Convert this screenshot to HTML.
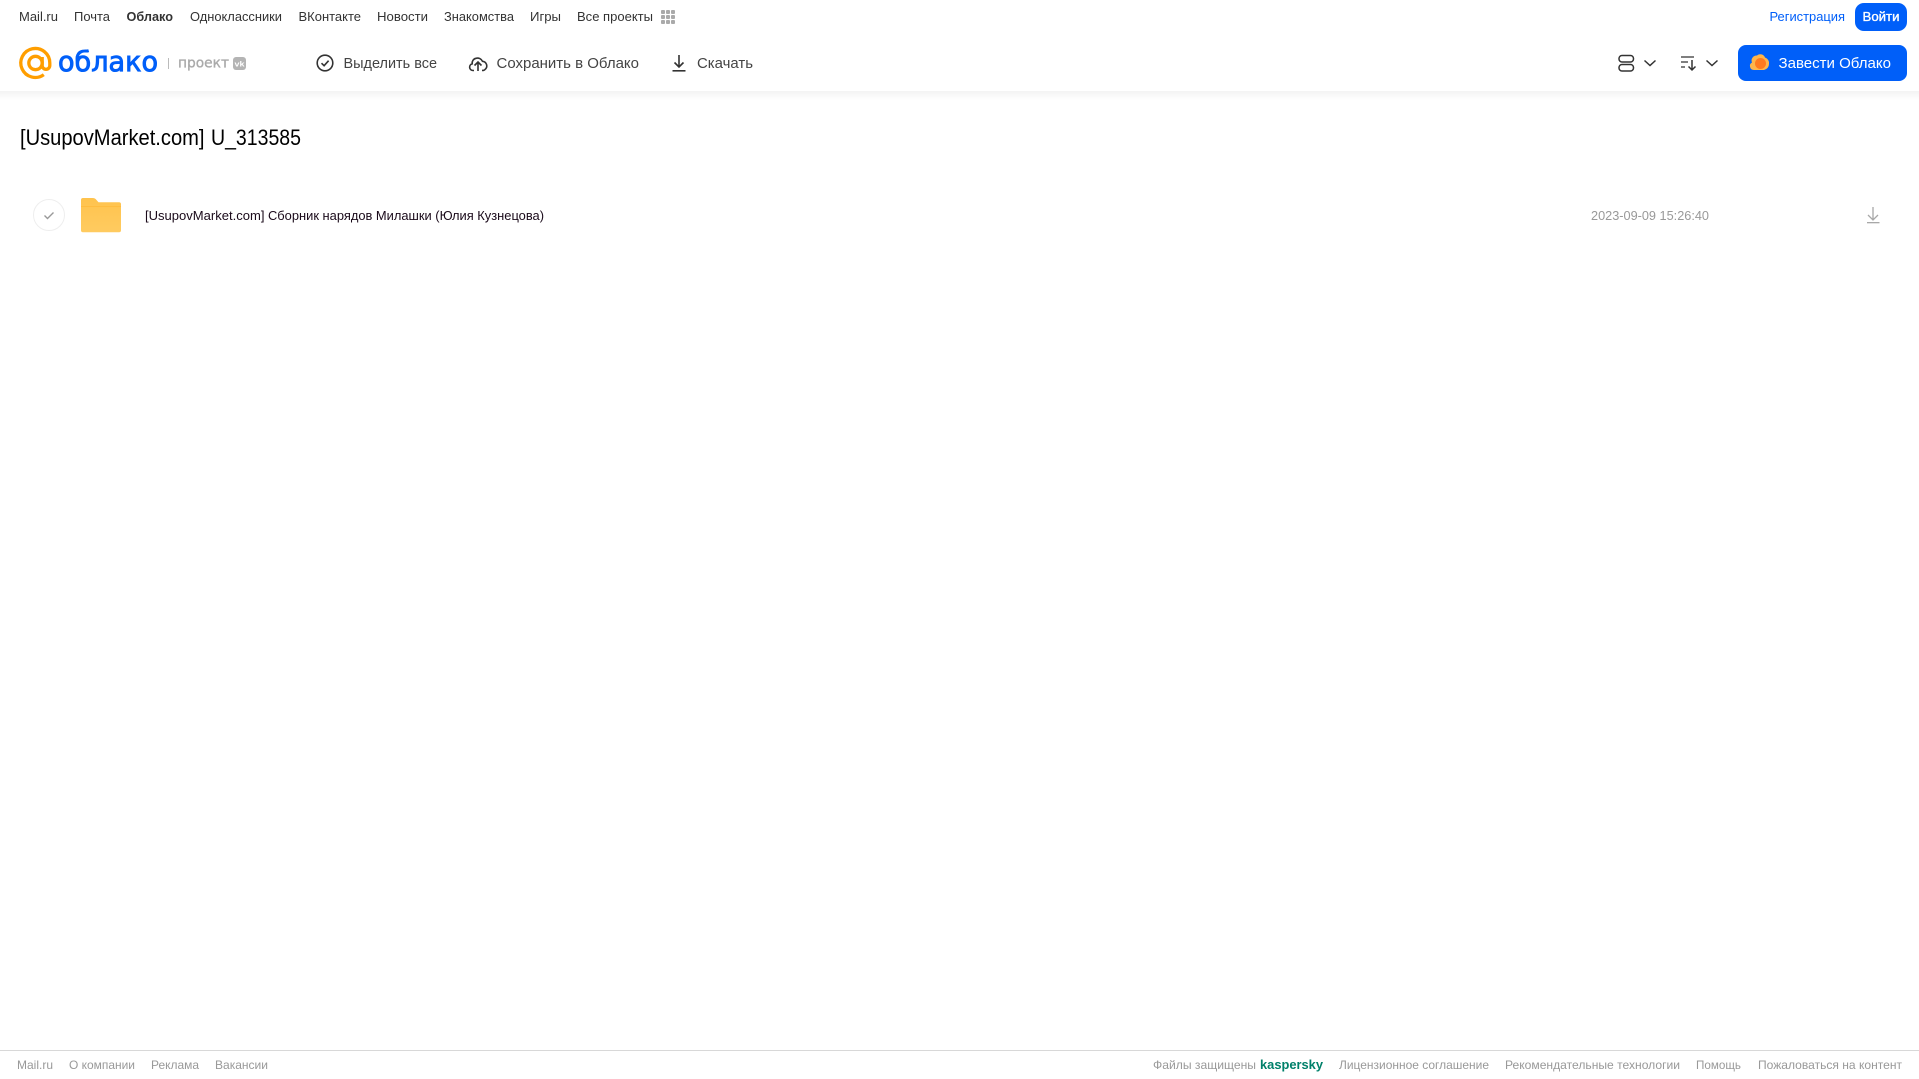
<!DOCTYPE html>
<html lang="ru"><head><meta charset="utf-8"><title>[UsupovMarket.com] U_313585</title>
<style>
html,body{margin:0;padding:0;background:#fff;width:1919px;height:1079px;overflow:hidden}
svg{display:block;position:absolute;left:0;top:0}
text{font-family:"Liberation Sans",Arial,sans-serif}
.n{font-size:13px;fill:#333}
.t{font-size:15px;fill:#444}
.f{font-size:12px;fill:#999}
</style></head><body>
<svg width="1919" height="1079" viewBox="0 0 1919 1079" xmlns="http://www.w3.org/2000/svg">
<defs><linearGradient id="sh" x1="0" y1="0" x2="0" y2="1"><stop offset="0" stop-color="#f3f3f3"/><stop offset="1" stop-color="#fff"/></linearGradient>
<linearGradient id="fd" x1="0" y1="0" x2="0" y2="1"><stop offset="0" stop-color="#ffc34d"/><stop offset="1" stop-color="#ffcb60"/></linearGradient></defs>
<rect x="0" y="91" width="1919" height="9" fill="url(#sh)"/>

<text class="n" x="19" y="21" textLength="39" lengthAdjust="spacingAndGlyphs">Mail.ru</text>
<text class="n" x="74" y="21" textLength="36" lengthAdjust="spacingAndGlyphs">Почта</text>
<text class="n" x="126.500" y="21" textLength="46.500" lengthAdjust="spacingAndGlyphs" font-weight="700">Облако</text>
<text class="n" x="190" y="21" textLength="92" lengthAdjust="spacingAndGlyphs">Одноклассники</text>
<text class="n" x="298.500" y="21" textLength="62.500" lengthAdjust="spacingAndGlyphs">ВКонтакте</text>
<text class="n" x="377" y="21" textLength="51" lengthAdjust="spacingAndGlyphs">Новости</text>
<text class="n" x="444" y="21" textLength="70" lengthAdjust="spacingAndGlyphs">Знакомства</text>
<text class="n" x="530" y="21" textLength="31" lengthAdjust="spacingAndGlyphs">Игры</text>
<text class="n" x="577" y="21" textLength="76" lengthAdjust="spacingAndGlyphs">Все проекты</text>
<g fill="#aaa"><rect x="661" y="10" width="4" height="4" rx="1"/><rect x="666" y="10" width="4" height="4" rx="1"/><rect x="671" y="10" width="4" height="4" rx="1"/><rect x="661" y="15" width="4" height="4" rx="1"/><rect x="666" y="15" width="4" height="4" rx="1"/><rect x="671" y="15" width="4" height="4" rx="1"/><rect x="661" y="20" width="4" height="4" rx="1"/><rect x="666" y="20" width="4" height="4" rx="1"/><rect x="671" y="20" width="4" height="4" rx="1"/></g>

<text x="1769.500" y="21" font-size="13" fill="#005ff9" textLength="75.500" lengthAdjust="spacingAndGlyphs">Регистрация</text>
<rect x="1855" y="3" width="52" height="28" rx="9" fill="#005ff9"/>
<text x="1862.500" y="21" font-size="13" fill="#fff" stroke="#fff" stroke-width=".35" textLength="37" lengthAdjust="spacingAndGlyphs">Войти</text>

<circle cx="35.500" cy="63" r="6.700" fill="none" stroke="#ff9e00" stroke-width="3.300"/>
<path d="M42.200 57v8.500a3.700 3.700 0 0 0 7.600 0v-2.500a14.500 14.500 0 1 0-6 11.700" fill="none" stroke="#ff9e00" stroke-width="3.300"/>
<text x="58" y="71" font-size="28" fill="#005ff9" stroke="#005ff9" stroke-width=".9" style="font-family:'DejaVu Sans',sans-serif" textLength="100" lengthAdjust="spacingAndGlyphs">облако</text>
<rect x="168" y="58" width="1" height="11" fill="#bbb"/>
<text x="178" y="67.500" font-size="14" fill="#aaa" stroke="#aaa" stroke-width=".35" style="font-family:'DejaVu Sans',sans-serif" textLength="51" lengthAdjust="spacingAndGlyphs">проект</text>
<rect x="233" y="57" width="13" height="13" rx="3" fill="#b4b4b4"/>
<text x="234.500" y="66.500" font-size="7" font-weight="700" fill="#fff" textLength="10" lengthAdjust="spacingAndGlyphs">vk</text>

<circle cx="325" cy="63" r="7.800" fill="none" stroke="#333" stroke-width="1.600"/>
<path d="M321.500 63.200l2.600 2.500 4.500-5" fill="none" stroke="#333" stroke-width="1.600"/>
<text class="t" x="343.500" y="68" textLength="93.500" lengthAdjust="spacingAndGlyphs">Выделить все</text>

<path d="M474 70.500h-1a3.400 3.400 0 0 1-.8-6.700 4.800 4.800 0 0 1 3.800-5.500 5.400 5.400 0 0 1 6.500 3 4.600 4.600 0 0 1 2.500 8.200 3 3 0 0 1-1.500.9h-1.500" fill="none" stroke="#333" stroke-width="1.600"/>
<path d="M478 71v-9M474.500 65.500l3.500-3.500 3.500 3.500" fill="none" stroke="#333" stroke-width="1.600"/>
<text class="t" x="496.500" y="68" textLength="142.500" lengthAdjust="spacingAndGlyphs">Сохранить в Облако</text>

<path d="M679 55v12M674.500 62.500l4.500 4.500 4.500-4.500" fill="none" stroke="#333" stroke-width="1.600"/>
<rect x="672.500" y="70" width="13" height="1.600" fill="#333"/>
<text class="t" x="697" y="68" textLength="56" lengthAdjust="spacingAndGlyphs">Скачать</text>

<g fill="none" stroke="#333" stroke-width="1.500">
<rect x="1619" y="55.500" width="14.500" height="6.500" rx="3"/><rect x="1619" y="64.500" width="14.500" height="6.500" rx="3"/>
<path d="M1644.500 60.500l5.500 5 5.500-5"/>
<path d="M1681 57h13M1681 62h7M1681 67h4" stroke-width="1.300"/><path d="M1692 60v10M1688.500 66.500l3.500 3.500 3.500-3.500"/>
<path d="M1706.500 60.500l5.500 5 5.500-5"/>
</g>
<rect x="1738" y="45" width="169" height="36" rx="8" fill="#005ff9"/>
<path d="M1754 70a4 4 0 0 1-2-7.500 5 5 0 0 1 5-7 5 5 0 0 1 8 2 5.800 5.800 0 0 1 4 6.500 6 6 0 0 1-5 6z" fill="#ffb54a"/>
<circle cx="1760.500" cy="63.500" r="5.500" fill="#ff7a1f"/>
<text x="1778.500" y="68" font-size="15" fill="#fff" textLength="112.500" lengthAdjust="spacingAndGlyphs">Завести Облако</text>

<text x="20" y="145" font-size="22" fill="#000" textLength="184.500" lengthAdjust="spacingAndGlyphs">[UsupovMarket.com]</text>
<text x="211" y="145" font-size="22" fill="#000" textLength="90" lengthAdjust="spacingAndGlyphs">U_313585</text>

<circle cx="49" cy="215" r="15.500" fill="#fff" stroke="#eee"/>
<path d="M44.500 215.500l3 3 6-6" fill="none" stroke="#999" stroke-width="1.400"/>
<path d="M81 200a2 2 0 0 1 2-2h9.500c2 0 3 .8 4 2l2 2.200h20.500a2 2 0 0 1 2 2v26a2 2 0 0 1-2 2h-36a2 2 0 0 1-2-2z" fill="url(#fd)"/>
<rect x="81" y="206" width="40" height="1" fill="#ffb530" opacity=".55"/>
<text x="145" y="220" font-size="13" fill="#1a0a1a" textLength="119.500" lengthAdjust="spacingAndGlyphs">[UsupovMarket.com]</text>
<text x="268" y="220" font-size="13" fill="#1a0a1a" textLength="276" lengthAdjust="spacingAndGlyphs">Сборник нарядов Милашки (Юлия Кузнецова)</text>
<text x="1591" y="220" font-size="13" fill="#999" textLength="118" lengthAdjust="spacingAndGlyphs">2023-09-09 15:26:40</text>
<path d="M1873 207v13M1868 215l5 5 5-5" fill="none" stroke="#a8a8a8" stroke-width="1.300"/>
<rect x="1867" y="222" width="12.500" height="1.300" fill="#a8a8a8"/>

<rect x="0" y="1050" width="1919" height="1" fill="#d8d8d8"/>
<text class="f" x="17" y="1069" textLength="36" lengthAdjust="spacingAndGlyphs">Mail.ru</text>
<text class="f" x="69" y="1069" textLength="66" lengthAdjust="spacingAndGlyphs">О компании</text>
<text class="f" x="151" y="1069" textLength="48" lengthAdjust="spacingAndGlyphs">Реклама</text>
<text class="f" x="215" y="1069" textLength="53" lengthAdjust="spacingAndGlyphs">Вакансии</text>
<text class="f" x="1153" y="1069" textLength="103" lengthAdjust="spacingAndGlyphs">Файлы защищены</text>
<text x="1260" y="1069" font-size="13" font-weight="700" fill="#00806a" textLength="63" lengthAdjust="spacingAndGlyphs">kaspersky</text>
<text class="f" x="1339" y="1069" textLength="150" lengthAdjust="spacingAndGlyphs">Лицензионное соглашение</text>
<text class="f" x="1505" y="1069" textLength="175" lengthAdjust="spacingAndGlyphs">Рекомендательные технологии</text>
<text class="f" x="1696" y="1069" textLength="45" lengthAdjust="spacingAndGlyphs">Помощь</text>
<text class="f" x="1758" y="1069" textLength="144" lengthAdjust="spacingAndGlyphs">Пожаловаться на контент</text>
</svg>
</body></html>
